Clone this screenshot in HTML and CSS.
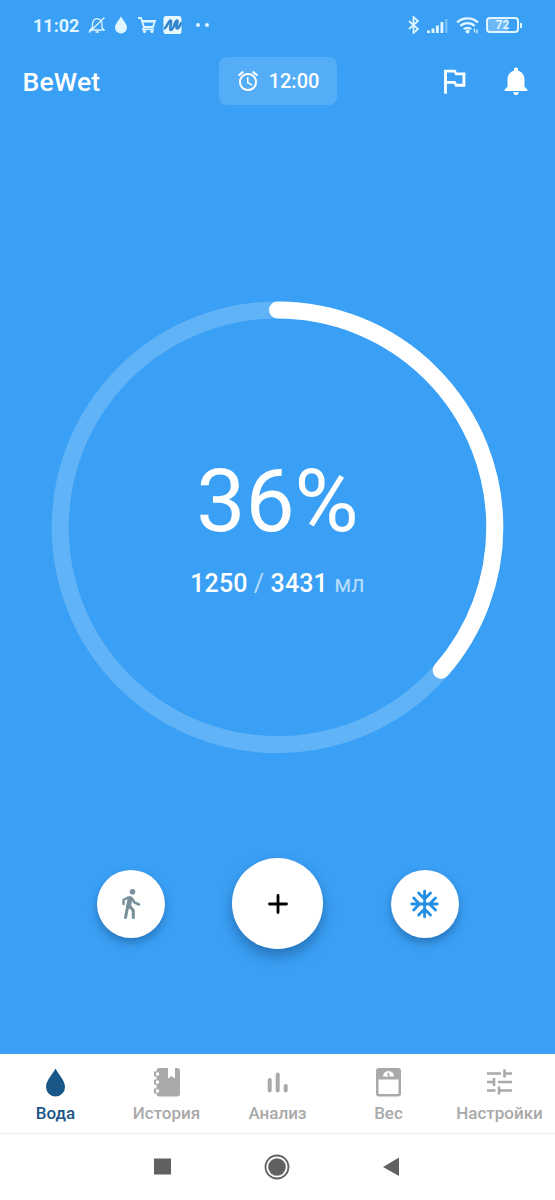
FILE: index.html
```html
<!DOCTYPE html>
<html lang="ru">
<head>
    <meta charset="UTF-8">
    <meta name="viewport" content="width=device-width, initial-scale=1.0">
    <title>BeWet</title>
    <link rel="stylesheet" href="styles.css">
</head>
<body>
    <div class="status-bar">
        <span class="clock">11:02</span>
        <svg class="muted" width="18" height="18" viewBox="0 0 18 18" fill="none" stroke="currentColor" stroke-width="1.3">
            <path d="M2 14h14l-2-2.5V8c0-2.8-1.8-4.7-4-5.2-2.8-.5-5.5 1.500-5.500 5.200v3.500L2 14zM7.500 16h3.500M1 16.500L16.500 1.500"/>
        </svg>
        <svg class="drop" width="14" height="18" viewBox="0 0 14 18" fill="currentColor">
            <path d="M7 0.500C5 4 1 8 1 11.500a6 6 0 0 0 12 0C13 8 9 4 7 .5z"/>
        </svg>
        <svg class="cart" width="19" height="18" viewBox="0 0 19 18" fill="none" stroke="currentColor" stroke-width="1.8">
            <path d="M0 2h3l3 9h9l2-6H4.500M5 5.500h11M6 11l-1 2.300H16"/>
            <circle cx="6.500" cy="15.500" r="1.600" fill="currentColor" stroke="none"/>
            <circle cx="14" cy="15.500" r="1.600" fill="currentColor" stroke="none"/>
        </svg>
        <svg class="wave" width="19" height="18" viewBox="0 0 19 18">
            <rect x=".5" width="18" height="18" rx="2.500" fill="#e8f8ff"/>
            <path d="M1 12.500c2.500 0 4.500-8 6.500-8s-2 9.500.5 9.500 4-10 6-9.500-2.500 8 .5 8c1.500 0 2.500-4 4-6" fill="none" stroke="#3585cf" stroke-width="2.600"/>
        </svg>
        <span class="dots"><i></i><i></i></span>
        <div class="signals">
            <svg width="12" height="18" viewBox="0 0 12 18" fill="none" stroke="currentColor" stroke-width="1.700">
                <path d="M1 5l9 8-4.500 4V1L10 5l-9 8"/>
            </svg>
            <svg class="cell" width="21" height="15" viewBox="0 0 21 15" fill="currentColor">
                <path d="M0 12.500h3V15H0zM4.500 10.500h3V15h-3zM9 7.500h2.800V15H9zM13.500 4h2.800v11h-2.800z"/>
                <path d="M18 1h2.500v14H18z" opacity=".35"/>
            </svg>
            <svg class="wifi" width="23" height="18" viewBox="0 0 23 18" fill="none" stroke="currentColor" stroke-width="2.300">
                <path d="M1 6.500c5.500-5.500 15.500-5.500 21 0M4.300 10c4-3.800 10.400-3.800 14.400 0M7.800 13.200c2-1.900 5.400-1.900 7.400 0"/>
                <circle cx="11.500" cy="15.500" r="2" fill="currentColor" stroke="none"/>
                <path d="M18.500 12.500v4M21 13.500v4" stroke-width="1.200"/>
            </svg>
            <span class="battery"><span class="battery-body">72</span></span>
        </div>
    </div>

    <header class="header">
        <h1>BeWet</h1>
        <button class="reminder">
            <svg width="24" height="24" viewBox="0 0 24 24" fill="currentColor">
                <path d="M22 5.720l-4.600-3.860-1.290 1.530 4.600 3.860L22 5.720zM7.880 3.390L6.600 1.860 2 5.710l1.290 1.530 4.590-3.850zM12.500 8H11v6l4.750 2.850.75-1.230-4-2.370V8zM12 4c-4.970 0-9 4.030-9 9s4.020 9 9 9c4.970 0 9-4.030 9-9s-4.030-9-9-9zm0 16c-3.870 0-7-3.130-7-7s3.130-7 7-7 7 3.130 7 7-3.130 7-7 7z"/>
            </svg>
            <span>12:00</span>
        </button>
        <div class="header-actions">
            <svg width="34" height="34" viewBox="0 0 24 24" fill="currentColor">
                <path d="M14 6l-1-2H5v17h2v-7h5l1 2h7V6h-6zm4 8h-4l-1-2H7V6h5l1 2h5v6z"/>
            </svg>
            <svg width="34" height="34" viewBox="0 0 24 24" fill="currentColor">
                <path d="M12 22c1.100 0 2-.9 2-2h-4c0 1.100.9 2 2 2zm6-6v-5c0-3.070-1.630-5.640-4.500-6.320V4c0-.83-.67-1.500-1.500-1.500s-1.500.67-1.500 1.500v.68C7.640 5.360 6 7.920 6 11v5l-2 2v1h16v-1l-2-2z"/>
            </svg>
        </div>
    </header>

    <main class="water">
        <div class="progress">
            <svg class="ring" width="452" height="452" viewBox="0 0 452 452" fill="none">
                <circle cx="225.500" cy="226.300" r="217.300" stroke="#fff" stroke-opacity=".2" stroke-width="17"/>
                <circle cx="225.500" cy="226.300" r="217.300" stroke="#fff" stroke-width="17" stroke-linecap="round" pathLength="100" stroke-dasharray="36.430 100" transform="rotate(-90 225.500 226.300)"/>
            </svg>
            <div class="percent">36%</div>
            <div class="amount"><b>1250</b> <span>/</span> <b>3431</b> <span class="unit">мл</span></div>
        </div>

        <div class="actions">
            <button class="round walk">
                <svg width="34" height="34" viewBox="0 0 34 34" fill="none" stroke="currentColor" stroke-linecap="round" stroke-linejoin="round">
                    <circle cx="18.500" cy="4.800" r="2.800" fill="currentColor" stroke="none"/>
                    <path d="M16 11.500L14.500 19.500" stroke-width="4.800"/>
                    <path d="M14 10.500l-4.500 2.500V17M18 11.500l2.500 4 4.500 2" stroke-width="2.500"/>
                    <path d="M13.700 19.500L11.500 30.500M16 19.500l3.300 4V30.500" stroke-width="3"/>
                </svg>
            </button>
            <button class="round add">
                <svg width="34" height="34" viewBox="0 0 24 24" fill="none" stroke="currentColor" stroke-width="2" stroke-linecap="round">
                    <path d="M12 6v12M6 12h12"/>
                </svg>
            </button>
            <button class="round cold">
                <svg width="34" height="34" viewBox="0 0 24 24" fill="none" stroke="currentColor" stroke-width="2" stroke-linecap="round">
                    <path d="M11.700 3v18M2.700 12h18M7.500 4.300l4.200 4.200 4.200-4.200M7.500 19.700l4.200-4.200 4.200 4.200M4 7.800L8.200 12 4 16.200M19.400 7.800L15.200 12l4.200 4.200"/>
                </svg>
            </button>
        </div>
    </main>

    <nav class="tabs">
        <a class="tab active">
            <svg width="34" height="34" viewBox="0 0 34 34" fill="currentColor">
                <path d="M16.500 3.500C13.500 9.500 7 15.500 7 22a9.500 9.500 0 0 0 19 0C26 15.500 19.500 9.500 16.500 3.500z"/>
            </svg>
            <span>Вода</span>
        </a>
        <a class="tab">
            <svg width="34" height="34" viewBox="0 0 34 34">
                <path d="M9.500 3H18v10.500l3.500-2.500 3.500 2.500V3h2a3 3 0 0 1 3 3v22.500a3 3 0 0 1-3 3H9.500a3 3 0 0 1-3-3V6a3 3 0 0 1 3-3z" fill="currentColor"/>
                <path d="M4 9h4M4 17h4M4 26h4" stroke="currentColor" stroke-width="5"/>
                <path d="M6 7.500h3v3H6zM6 15.500h3v3H6zM6 24.500h3v3H6z" fill="#fff"/>
            </svg>
            <span>История</span>
        </a>
        <a class="tab">
            <svg width="34" height="34" viewBox="0 0 34 34" fill="none" stroke="currentColor" stroke-width="4" stroke-linecap="round">
                <path d="M8.700 15v10.500M16.700 9.500v16M24.700 21v4.500"/>
            </svg>
            <span>Анализ</span>
        </a>
        <a class="tab">
            <svg width="34" height="34" viewBox="0 0 34 34">
                <path d="M7 3h19a3 3 0 0 1 3 3v22.500a3 3 0 0 1-3 3H7a3 3 0 0 1-3-3V6a3 3 0 0 1 3-3z" fill="currentColor"/>
                <path d="M6.500 14.500h20V29h-20zM11 11.500a5.500 5.500 0 0 1 11 0z" fill="#fff"/>
                <path d="M17 11.500l-1-3.500" stroke="currentColor" stroke-width="1.800"/>
            </svg>
            <span>Вес</span>
        </a>
        <a class="tab">
            <svg width="34" height="34" viewBox="0 0 34 34" fill="none" stroke="currentColor" stroke-width="2.600">
                <path d="M4 8.500h14M21.500 8.500H29M21.500 4.500v8M4 17h7.500M11 13v8M15 17h14M4 25.500h8.500M16 25.500h13M16 21.500v8"/>
            </svg>
            <span>Настройки</span>
        </a>
    </nav>

    <div class="system-nav">
        <svg width="26" height="26" viewBox="0 0 26 26" fill="currentColor"><path d="M4 4.500h17v16H4z"/></svg>
        <svg width="26" height="26" viewBox="0 0 26 26">
            <circle cx="13" cy="13" r="11.500" fill="none" stroke="currentColor" stroke-width="1.800"/>
            <circle cx="13" cy="13" r="8.800" fill="currentColor"/>
        </svg>
        <svg width="26" height="26" viewBox="0 0 26 26" fill="currentColor"><path d="M21 3.500v18.500L5 13z"/></svg>
    </div>
</body>
</html>
```

FILE: styles.css
```css
* {
    box-sizing: border-box;
}
body {
    margin: 0;
    height: 1200px;
    display: flex;
    flex-direction: column;
    overflow: hidden;
    font-family: Roboto, "Noto Sans", sans-serif;
    background: #3aa0f5;
    color: #fff;
}
svg {
    display: block;
    flex: none;
}
button {
    border: 0;
    padding: 0;
    font: inherit;
    color: inherit;
}

/* status bar */
.status-bar {
    height: 50px;
    display: flex;
    align-items: center;
    padding: 0 33px;
    color: #dff5ff;
}
.clock {
    width: 55px;
    font-size: 18px;
    font-weight: 700;
}
.drop {
    margin-left: 8px;
}
.cart {
    margin-left: 10px;
}
.wave {
    margin-left: 6px;
}
.dots {
    display: flex;
    gap: 5px;
    margin-left: 14px;
}
.dots i {
    width: 4px;
    height: 4px;
    border-radius: 50%;
    background: currentColor;
}
.signals {
    display: flex;
    align-items: center;
    margin-left: auto;
}
.cell {
    margin-left: 7px;
}
.wifi {
    margin: 0 7px 0 8px;
}
.battery {
    display: flex;
    align-items: center;
}
.battery-body {
    width: 33px;
    height: 16px;
    border: 2px solid currentColor;
    border-radius: 4px;
    font-size: 12px;
    font-weight: 700;
    line-height: 13px;
    text-align: center;
    background: linear-gradient(90deg, #6db9f8 70%, transparent 70%);
}
.battery::after {
    content: "";
    width: 2px;
    height: 5px;
    margin-left: 1px;
    background: currentColor;
}

/* header */
.header {
    height: 62px;
    display: grid;
    grid-template-columns: 1fr 118px 1fr;
    align-items: center;
    padding: 0 22.5px;
}
h1 {
    margin: 0;
    font-size: 26.5px;
    font-weight: 500;
    letter-spacing: 0.2px;
}
.reminder {
    height: 48px;
    display: flex;
    align-items: center;
    justify-content: center;
    gap: 9px;
    border-radius: 8px;
    background: #55adf7;
    font-size: 20px;
    font-weight: 500;
}
.header-actions {
    display: flex;
    justify-content: flex-end;
    gap: 28px;
}

/* progress */
.water {
    flex: 1;
    display: flex;
    flex-direction: column;
    align-items: center;
    padding-top: 189px;
}
.progress {
    display: grid;
    grid-template: 452px / 452px;
    justify-items: center;
}
.ring, .percent, .amount {
    grid-area: 1 / 1;
}
.ring {
    overflow: visible;
}
.percent {
    margin-top: 147px;
    font-size: 87.5px;
    line-height: 106px;
}
.amount {
    margin-top: 267px;
    font-size: 25px;
    line-height: 32px;
    letter-spacing: 0.1px;
}
.amount b {
    font-weight: 500;
}
.amount span {
    color: #b4dcfb;
}
.amount .unit {
    font-size: 23px;
}

/* action buttons */
.actions {
    display: flex;
    align-items: center;
    gap: 67.5px;
    margin-top: 105px;
}
.round {
    width: 68px;
    height: 68px;
    display: flex;
    align-items: center;
    justify-content: center;
    border-radius: 50%;
    background: #fff;
    box-shadow: 0 5px 10px rgba(0, 30, 70, 0.32);
}
.walk {
    color: #78909c;
}
.add {
    width: 91px;
    height: 91px;
    color: #000;
    box-shadow: 0 7px 14px rgba(0, 30, 70, 0.35);
}
.cold {
    color: #2590e3;
}

/* bottom tabs */
.tabs {
    height: 80px;
    display: grid;
    grid-template-columns: repeat(5, 1fr);
    background: #fff;
    border-bottom: 1px solid #eee;
}
.tab {
    display: flex;
    flex-direction: column;
    align-items: center;
    padding-top: 11px;
    color: #a9a9a9;
    font-size: 17px;
    font-weight: 500;
    line-height: 20px;
}
.tab span {
    margin-top: 4px;
}
.tab.active {
    color: #1b5688;
}

/* android buttons */
.system-nav {
    height: 66px;
    display: flex;
    justify-content: center;
    align-items: center;
    gap: 88px;
    padding-right: 1px;
    background: #fff;
    color: #616161;
}
```
